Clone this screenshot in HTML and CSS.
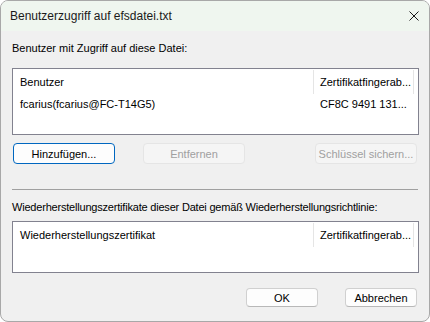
FILE: index.html
```html
<!DOCTYPE html>
<html lang="de">
<head>
<meta charset="utf-8">
<link rel="stylesheet" href="styles.css">
</head>
<body>
<div class="window">
  <div class="titlebar">
    <span class="title">Benutzerzugriff auf efsdatei.txt</span>
    <svg class="close" width="10" height="10" viewBox="0 0 10 10"><path d="M0.5 0.5L9.5 9.5M9.5 0.5L0.5 9.5" stroke="#1a1a1a" stroke-width="1" fill="none"/></svg>
  </div>
  <div class="content">
    <div class="label label1">Benutzer mit Zugriff auf diese Datei:</div>
    <div class="list list1">
      <div class="row head">
        <div class="col c1">Benutzer</div>
        <div class="col c2">Zertifikatfingerab...</div>
      </div>
      <div class="row item">
        <div class="col c1">fcarius(fcarius@FC-T14G5)</div>
        <div class="col c2">CF8C 9491 131...</div>
      </div>
    </div>
    <div class="btnrow">
      <button class="btn focus">Hinzufügen...</button>
      <button class="btn disabled">Entfernen</button>
      <span class="spacer"></span>
      <button class="btn disabled">Schlüssel sichern...</button>
    </div>
    <div class="sep"></div>
    <div class="label label2">Wiederherstellungszertifikate dieser Datei gemäß Wiederherstellungsrichtlinie:</div>
    <div class="list list2">
      <div class="row head">
        <div class="col c1">Wiederherstellungszertifikat</div>
        <div class="col c2">Zertifikatfingerab...</div>
      </div>
    </div>
    <div class="footer">
      <button class="btn small">OK</button>
      <button class="btn small">Abbrechen</button>
    </div>
  </div>
</div>
</body>
</html>
```
FILE: styles.css
```css
* { box-sizing: border-box; }
html, body { margin: 0; padding: 0; background: #ffffff; }
body {
  font-family: "Liberation Sans", Arial, sans-serif;
  font-size: 11px;
  color: #000;
}
.window {
  width: 430px;
  height: 322px;
  border: 1px solid #a8a8a8;
  border-radius: 8px;
  overflow: hidden;
  background: #f0f0f0;
  display: flex;
  flex-direction: column;
}
.titlebar {
  height: 30px;
  flex: none;
  background: #eff6ef;
  display: flex;
  align-items: center;
  padding: 0 10px 0 9px;
}
.title { flex: 1; font-size: 12px; color: #1a1a1a; }
.close { display: block; }
.content {
  padding: 0 10px 0 11px;
  display: flex;
  flex-direction: column;
}
.label { line-height: 15px; white-space: nowrap; }
.label1 { margin-top: 10px; }
.label2 { margin-top: 10px; letter-spacing: -0.2px; }
.list {
  background: #fff;
  border: 1px solid #82828f;
  margin-top: 12px;
}
.list1 { height: 67px; }
.list2 { height: 52px; margin-top: 6px; }
.row { display: flex; }
.row.head { height: 25px; align-items: center; }
.row.item { height: 20px; align-items: center; }
.col { padding-left: 7px; white-space: nowrap; overflow: hidden; }
.c1 { width: 301px; }
.c2 { width: 100px; padding-left: 6px; }
.row.head .col { height: 24px; line-height: 24px; border-right: 1px solid #e5e5e5; margin-top: 1px; }
.btnrow {
  display: flex;
  margin-top: 8px;
  gap: 28px;
}
.spacer { flex: 1; }
.btn {
  font-family: "Liberation Sans", Arial, sans-serif;
  font-size: 11px;
  white-space: nowrap;
  width: 102px;
  height: 21px;
  border-radius: 4px;
  background: #fdfdfd;
  border: 1px solid #d0d0d0;
  border-bottom-color: #b8b8b8;
  color: #000;
  padding: 0;
  margin: 0;
}
.btn.focus { border: 1px solid #0067c0; margin-left: 1px; }
.btn.disabled { background: #f5f5f5; border: 1px solid #e5e5e5; color: #a0a0a0; }
.btnrow .btn:last-child { margin-right: 2px; }
.sep {
  height: 1px;
  background: #a0a0a0;
  margin-top: 25px;
  margin-right: 1px;
}
.footer {
  display: flex;
  justify-content: flex-end;
  gap: 27px;
  margin-top: 15px;
  padding-right: 2px;
}
.btn.small { width: 72px; height: 19px; }
```
